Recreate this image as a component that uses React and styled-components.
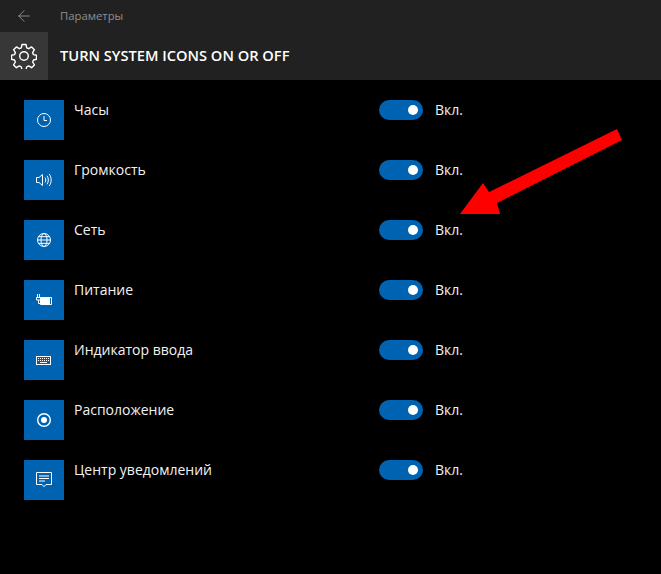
import React from "react";
import styled, { createGlobalStyle } from "styled-components";
import { ArrowLeft } from "lucide-react";

const Global = createGlobalStyle`
  html, body { margin: 0; padding: 0; background: #000; }
  body { width: 661px; height: 574px; overflow: hidden; font-family: "Open Sans", "Noto Sans", sans-serif; }
`;

const Page = styled.div`
  position: relative;
  width: 661px;
  height: 574px;
  background: #000;
  color: #fff;
`;

const Chrome = styled.header`
  background: #212121;
`;

const TitleBar = styled.div`
  display: flex;
  align-items: center;
  height: 32px;
`;

const BackButton = styled.div`
  display: flex;
  align-items: center;
  justify-content: center;
  width: 48px;
  height: 32px;
  color: #a0a0a0;
`;

const AppName = styled.span`
  margin: 0 0 2px 12px;
  font-size: 11.3px;
  color: #8f8f8f;
`;

const HeaderRow = styled.div`
  display: flex;
  align-items: center;
  height: 48px;
`;

const GearTile = styled.div`
  display: flex;
  align-items: center;
  justify-content: center;
  width: 48px;
  height: 48px;
  background: #373737;
`;

const Title = styled.h1`
  margin: 0 0 2px 12px;
  font-size: 14.65px;
  font-weight: 600;
  white-space: nowrap;
`;

const List = styled.div`
  display: flex;
  flex-direction: column;
  gap: 20px;
  padding: 20px 0 0 24px;
`;

const Row = styled.div`
  display: flex;
  align-items: flex-start;
  height: 40px;
`;

const Tile = styled.div`
  display: flex;
  align-items: center;
  justify-content: center;
  flex: none;
  width: 40px;
  height: 40px;
  background: #0063b1;
`;

const Label = styled.span`
  width: 305px;
  margin-left: 10px;
  font-size: 14px;
  line-height: 20px;
  color: #f2f2f2;
`;

const Track = styled.div`
  display: flex;
  align-items: center;
  justify-content: flex-end;
  flex: none;
  width: 44px;
  height: 20px;
  padding-right: 5px;
  box-sizing: border-box;
  border-radius: 10px;
  background: #0063b1;
`;

const Knob = styled.div`
  width: 10px;
  height: 10px;
  border-radius: 50%;
  background: #fff;
`;

const State = styled.span`
  margin-left: 12px;
  font-size: 14px;
  line-height: 20px;
  color: #f2f2f2;
`;

const ArrowOverlay = styled.svg`
  position: absolute;
  left: 450px;
  top: 120px;
`;

const Stroke = { fill: "none", stroke: "#fff", strokeWidth: 1 };

const Clock = () => (
  <svg width="16" height="16" viewBox="0 0 16 16" {...Stroke}>
    <circle cx="8" cy="8" r="6.5" />
    <path d="M8 4v4.5h3" />
  </svg>
);
const Volume = () => (
  <svg width="18" height="16" viewBox="0 0 18 16" {...Stroke}>
    <path d="M1.5 5.5h2.5l3.500-3v11l-3.500-3H1.500z" />
    <path d="M10 5.500c1 1.500 1 3.500 0 5M12 3.800c1.800 2.500 1.800 6 0 8.500M14.200 2c2.600 3.500 2.600 8.500 0 12" />
  </svg>
);
const Globe = () => (
  <svg width="16" height="16" viewBox="0 0 16 16" {...Stroke}>
    <circle cx="8" cy="8" r="6.500" />
    <ellipse cx="8" cy="8" rx="3" ry="6.500" />
    <path d="M1.500 8h13M2.500 4.700h11M2.500 11.300h11" />
  </svg>
);
const Battery = () => (
  <svg width="16" height="12" viewBox="0 0 16 12" fill="none">
    <path d="M1.500 0v3M3.500 0v3M.5 3.500h4v2.500H.5zM2.500 6v3.500H4" stroke="#fff" />
    <path d="M4.500 3.500h11v7h-11z" stroke="#fff" />
    <rect x="5" y="4" width="9" height="6" fill="#fff" />
  </svg>
);
const Keyboard = () => (
  <svg width="16" height="12" viewBox="0 0 16 12" {...Stroke}>
    <rect x=".5" y="2.500" width="14" height="8" />
    <path d="M2 4.500h11M2 6.500h11" strokeDasharray="1 1" />
    <path d="M4 8.500h7" />
  </svg>
);
const Location = () => (
  <svg width="16" height="16" viewBox="0 0 16 16">
    <circle cx="8" cy="8" r="6.300" fill="none" stroke="#fff" strokeWidth="1.400" />
    <circle cx="8" cy="8" r="3" fill="#fff" />
  </svg>
);
const Notice = () => (
  <svg width="16" height="16" viewBox="0 0 16 16" {...Stroke}>
    <path d="M.5.500h15v12H10l-2 2.200-2-2.200H.500z" />
    <path d="M3 4h10M3 6.500h10M3 9h6" />
  </svg>
);
const Gear = () => (
  <svg width="26" height="26" viewBox="0 0 26 26" fill="none" stroke="#fff" strokeWidth="1.400" strokeLinejoin="round">
    <circle cx="13" cy="13" r="4.300" />
    <path d="M11 1.500h4l.7 3.300 2 .9 2.900-1.800 2.800 2.800-1.800 2.900.9 2 3 .7v4l-3 .7-.9 2 1.800 2.900-2.800 2.800-2.900-1.800-2 .9-.7 3h-4l-.7-3-2-.9-2.900 1.800-2.800-2.800 1.800-2.900-.9-2-3-.7v-4l3-.7.9-2-1.800-2.900 2.800-2.800 2.900 1.800 2-.9z" />
  </svg>
);

const rows = [
  ["Часы", Clock],
  ["Громкость", Volume],
  ["Сеть", Globe],
  ["Питание", Battery],
  ["Индикатор ввода", Keyboard],
  ["Расположение", Location],
  ["Центр уведомлений", Notice],
];

export default function App() {
  return (
    <Page>
      <Global />
      <Chrome>
        <TitleBar>
          <BackButton><ArrowLeft size={18} strokeWidth={1.1} /></BackButton>
          <AppName>Параметры</AppName>
        </TitleBar>
        <HeaderRow>
          <GearTile><Gear /></GearTile>
          <Title>TURN SYSTEM ICONS ON OR OFF</Title>
        </HeaderRow>
      </Chrome>
      <List>
        {rows.map(([name, Icon]) => (
          <Row key={name}>
            <Tile><Icon /></Tile>
            <Label>{name}</Label>
            <Track><Knob /></Track>
            <State>Вкл.</State>
          </Row>
        ))}
      </List>
      <ArrowOverlay width="180" height="100" viewBox="0 0 180 100">
        <polygon points="167,9 172,20 47,83 50,94 10,94 33,63 39,72" fill="#f00" />
      </ArrowOverlay>
    </Page>
  );
}
